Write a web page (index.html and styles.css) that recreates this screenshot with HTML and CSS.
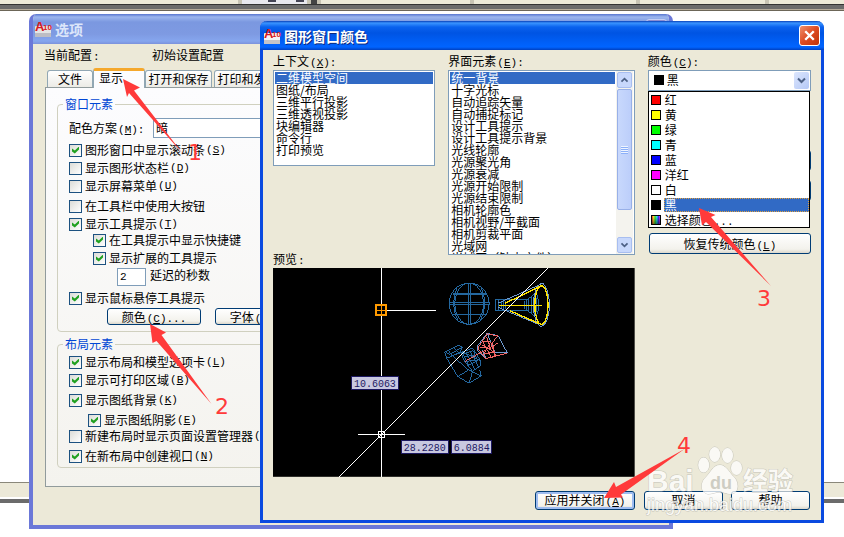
FILE: index.html
```html
<!DOCTYPE html>
<html lang="zh-CN">
<head>
<meta charset="utf-8">
<title>图形窗口颜色</title>
<link rel="stylesheet" href="styles.css">
</head>
<body>
<header class="toolstrip"><i class="dock d1"></i><i class="dock d2"></i><i class="gap"></i><i class="dock d3"></i><i class="dock d4"></i><i class="dock d5"></i><i class="dock d6"></i></header>
<div class="workspace"></div>
<footer class="statusbar"></footer>

<section class="window options" aria-label="选项">
  <div class="titlebar">
    <svg class="app-icon" viewBox="0 0 16 16"><rect x="0" y="5" width="16" height="11" rx="1" fill="#e4e4e4"/><rect x="0" y="12" width="16" height="4" fill="#bdbdc4"/><text x="0" y="10" class="icon-a">A</text><text x="8" y="9" class="icon-n">10</text></svg>
    <h2>选项</h2>
    <button class="ghost" aria-label="关闭"></button>
  </div>
  <div class="profile"><span>当前配置<b class="key">:</b></span><span>初始设置配置</span></div>
  <div class="tabs" role="tablist">
    <button role="tab" class="tab files">文件</button>
    <button role="tab" class="tab active" aria-selected="true">显示</button>
    <button role="tab" class="tab save">打开和保存</button>
    <button role="tab" class="tab print">打印和发布</button>
  </div>
  <div class="pane">
    <fieldset>
      <legend>窗口元素</legend>
      <div class="rows first">
        <div class="scheme"><label for="scheme">配色方案<b class="key">(<u>M</u>):</b></label><select id="scheme"><option>暗</option></select></div>
        <label class="row wide"><input type="checkbox" checked>图形窗口中显示滚动条<b class="key">(<u>S</u>)</b></label>
        <label class="row"><input type="checkbox">显示图形状态栏<b class="key">(<u>D</u>)</b></label>
        <label class="row"><input type="checkbox">显示屏幕菜单<b class="key">(<u>U</u>)</b></label>
        <label class="row wide"><input type="checkbox">在工具栏中使用大按钮</label>
        <label class="row"><input type="checkbox" checked>显示工具提示<b class="key">(<u>T</u>)</b></label>
        <label class="row tight indent"><input type="checkbox" checked>在工具提示中显示快捷键</label>
        <label class="row indent"><input type="checkbox" checked>显示扩展的工具提示</label>
        <div class="delay"><input id="delay" type="text" value="2"><label for="delay">延迟的秒数</label></div>
        <label class="row wide"><input type="checkbox" checked>显示鼠标悬停工具提示</label>
        <div class="pair"><button class="btn">颜色<b class="key">(<u>C</u>)...</b></button><button class="btn">字体<b class="key">(<u>F</u>)...</b></button></div>
      </div>
    </fieldset>
    <fieldset>
      <legend>布局元素</legend>
      <div class="rows">
        <label class="row wide"><input type="checkbox" checked>显示布局和模型选项卡<b class="key">(<u>L</u>)</b></label>
        <label class="row"><input type="checkbox" checked>显示可打印区域<b class="key">(<u>B</u>)</b></label>
        <label class="row wide"><input type="checkbox" checked>显示图纸背景<b class="key">(<u>K</u>)</b></label>
        <label class="row wide shadow"><input type="checkbox" checked>显示图纸阴影<b class="key">(<u>E</u>)</b></label>
        <label class="row tight"><input type="checkbox">新建布局时显示页面设置管理器<b class="key">(<u>G</u>)</b></label>
        <label class="row wide"><input type="checkbox" checked>在新布局中创建视口<b class="key">(<u>N</u>)</b></label>
      </div>
    </fieldset>
  </div>
</section>

<section class="window dialog" role="dialog" aria-label="图形窗口颜色">
  <div class="titlebar">
    <svg class="app-icon" viewBox="0 0 16 16"><rect x="0" y="5" width="16" height="11" rx="1" fill="#f4f4f4"/><rect x="0" y="12" width="16" height="4" fill="#c4c4c8"/><text x="0" y="10" class="icon-a">A</text><text x="8" y="9" class="icon-n">10</text></svg>
    <h2>图形窗口颜色</h2>
    <button class="close" aria-label="关闭"><svg viewBox="0 0 20 20"><path d="M5.500 5.500 14.500 14.500M14.500 5.500 5.500 14.500" stroke="#fff" stroke-width="2.500" fill="none"/></svg></button>
  </div>
  <div class="content">
    <div class="columns">
      <div class="col split">
        <div>
          <label class="caption" for="context">上下文<b class="key">(<u>X</u>):</b></label>
          <select id="context" class="list" size="8">
            <option selected>二维模型空间</option><option>图纸/布局</option><option>三维平行投影</option><option>三维透视投影</option><option>块编辑器</option><option>命令行</option><option>打印预览</option>
          </select>
        </div>
        <span class="caption-low">预览<b class="key">:</b></span>
      </div>
      <div class="col">
        <label class="caption" for="element">界面元素<b class="key">(<u>E</u>):</b></label>
        <div class="scrollbox">
          <select id="element" class="list" size="15">
            <option selected>统一背景</option><option>十字光标</option><option>自动追踪矢量</option><option>自动捕捉标记</option><option>设计工具提示</option><option>设计工具提示背景</option><option>光线轮廓</option><option>光源聚光角</option><option>光源衰减</option><option>光源开始限制</option><option>光源结束限制</option><option>相机轮廓色</option><option>相机视野/平截面</option><option>相机剪裁平面</option><option>光域网</option><option>光域网（缺少文件）</option>
          </select>
          <div class="scrollbar">
            <button aria-label="向上"><svg viewBox="0 0 15 15"><path d="M4 9.500 7.500 6 11 9.500" class="chev"/></svg></button>
            <div class="track"><div class="thumb"><i></i><i></i><i></i><i></i></div></div>
            <button aria-label="向下"><svg viewBox="0 0 15 15"><path d="M4 5.500 7.500 9 11 5.500" class="chev"/></svg></button>
          </div>
        </div>
      </div>
      <div class="col">
        <label class="caption" for="color">颜色<b class="key">(<u>C</u>):</b></label>
        <div class="combo">
          <select id="color"><option>黑</option></select>
          <i class="current-color"></i>
          <span class="arrow"><svg viewBox="0 0 15 15"><path d="M4 5.500 7.500 9 11 5.500" class="chev"/></svg></span>
          <ul class="menu" role="listbox" aria-label="颜色">
            <li role="option"><i class="swatch red"></i><span>红</span></li>
            <li role="option"><i class="swatch yellow"></i><span>黄</span></li>
            <li role="option"><i class="swatch green"></i><span>绿</span></li>
            <li role="option"><i class="swatch cyan"></i><span>青</span></li>
            <li role="option"><i class="swatch blue"></i><span>蓝</span></li>
            <li role="option"><i class="swatch magenta"></i><span>洋红</span></li>
            <li role="option"><i class="swatch white"></i><span>白</span></li>
            <li role="option" aria-selected="true"><i class="swatch black"></i><span>黑</span></li>
            <li role="option"><i class="swatch wheel"></i><span>选择颜色<b class="key">...</b></span></li>
          </ul>
        </div>
        <div class="restore">
          <button class="btn" aria-label="恢复当前元素"></button>
          <button class="btn" aria-label="恢复当前上下文"></button>
          <button class="btn last">恢复传统颜色<b class="key">(<u>L</u>)</b></button>
        </div>
      </div>
      <svg class="preview" viewBox="0 0 362 209">
        <rect width="362" height="209" fill="#000"/>
        <g shape-rendering="crispEdges" fill="none">
          <g transform="translate(157 -8) scale(.33333)" stroke-width="3">
            <g stroke="#2468a0">
              <ellipse cx="118" cy="131" rx="60" ry="62"/><ellipse cx="118" cy="131" rx="43" ry="62"/><path d="M115 69V193M122 69V193M58 129H179M58 133H179M68 100H168M68 103H168M66 163H170M82 83Q60 132 84 182M154 83Q176 132 152 182"/>
              <path d="M198 118H290V152H198ZM206 118V152M214 122V148M222 118V152M228 124V148M284 122V148M290 122 315 100Q328 134 315 168L290 150M296 116V154M306 108V162M314 100V168M315 100Q326 98 326 135Q326 170 315 168"/>
              <path d="M44 276 84 256 98 262 58 284ZM44 276 50 294 90 276 98 262M54 270 72 292M70 262 88 280M50 294 84 350 118 370 154 348 150 330M60 290 100 276 128 264 152 302 152 318 128 334 104 304 92 274M84 350 116 330 154 348M116 330 72 292M118 370 128 334M100 282 130 272 144 302 116 316ZM108 278 134 326M120 272 146 320M104 290 138 286M110 304 146 300M96 274 152 302"/>
            </g>
            <g stroke="#6f9bd0"><path d="M204 130 326 76 336 70 344 73M204 142 324 192 334 200 345 190"/><ellipse cx="335" cy="135" rx="24" ry="64"/><path d="M172 220 206 228 232 278 196 278ZM172 220 142 260 142 272 168 296 158 270"/></g>
            <g stroke="#ffe400" stroke-width="4"><path d="M207 136H336M226 130 326 82 336 78M240 152 326 190 334 192"/><ellipse cx="335" cy="135" rx="20" ry="58"/></g>
            <path stroke="#f26565" d="M172 222 158 244 144 264 168 296 232 280M172 222 204 228 188 248 196 290 168 296M158 244 182 246 198 290M156 254 196 278M150 262 182 266M106 304 204 250M162 282 196 276M170 230 184 272M158 244 184 292M182 246 162 284"/>
          </g>
          <path d="M66 209 275 0" stroke="#fff"/>
          <path d="M108.500 0V209M108.500 42.500H163M85 166.500H132" stroke="#fff"/>
          <rect x="103.500" y="37.500" width="10" height="10" stroke="#ff9a00" stroke-width="2"/><path d="M104 42.500H113M108.500 38V47" stroke="#ff9a00"/>
          <rect x="105.500" y="163.500" width="6" height="6" stroke="#fff"/>
          <g fill="#c8c8e0" stroke="#1c1860"><rect x="78.500" y="108.500" width="47" height="13"/><rect x="128.500" y="172.500" width="47" height="13"/><rect x="178.500" y="172.500" width="40" height="13"/></g>
        </g>
        <g class="dims"><text x="81" y="119">10.6063</text><text x="131" y="183">28.2280</text><text x="181" y="183">6.0884</text></g>
      </svg>
    </div>
    <div class="actions"><button class="btn default">应用并关闭<b class="key">(<u>A</u>)</b></button><button class="btn">取消</button><button class="btn">帮助</button></div>
  </div>
</section>

<svg class="overlay" viewBox="0 0 844 537" preserveAspectRatio="xMinYMin">
  <g class="mark">
    <ellipse cx="703.700" cy="465" rx="5.500" ry="7.500"/><ellipse cx="714.700" cy="454.500" rx="5.500" ry="7.500"/><ellipse cx="727.500" cy="455.500" rx="5.500" ry="7.500"/><ellipse cx="736.500" cy="468" rx="5.500" ry="7"/>
    <path d="M720 465C726 465 729 472 733 476C739 481 740 493 731 494C726 494 724 492 720 492C716 492 712 494 708 494C700 493 700 482 706 477C711 472 713 465 720 465Z"/>
    <text x="647" y="491" class="bai">Bai</text><text x="710" y="489" class="du">du</text><text x="743" y="490" class="exp">经验</text><text x="647" y="511" class="site">jingyan.baidu.com</text>
  </g>
  <g fill="#ff3a3a">
    <path d="M123 79 140 87.500 134 90.500 183 154 129 93 127 97Z"/>
    <path d="M150 324 166 332.500 161.500 335 211.500 404 156.500 341 152.500 343Z"/>
    <path d="M699 208 715.500 215 711 217 771 286 706 222 702 225.500Z"/>
    <path d="M604 498 614 482 616 487 684.500 449 621 494.500 623 497.500Z"/>
    <g class="numbers"><text x="195" y="160">1</text><text x="222" y="414">2</text><text x="764" y="306">3</text><text x="684" y="453">4</text></g>
  </g>
</svg>
</body>
</html>
```
FILE: styles.css
```css
* { box-sizing: border-box; }
body {
  margin: 0;
  min-height: 100vh;
  position: relative;
  display: flex;
  flex-direction: column;
  overflow: hidden;
  background: #fff;
  color: #000;
  font: 12px/14px "Noto Sans CJK SC", sans-serif;
}
button, select, input { font: inherit; color: inherit; margin: 0; padding: 0; }
button { white-space: nowrap; }
h2 { margin: 0; font-size: 14px; line-height: 16px; font-weight: 700; }
i { font-style: normal; }
.key { margin-left: 1px; font: 400 11px/0 "Liberation Mono", monospace; }

.toolstrip {
  display: flex;
  gap: 4px;
  height: 11px;
  background: linear-gradient(#c8c4b4 0 4px, #333 4px 5px, #6b6b6b 5px 9px, #b5ab9a 9px 10px, #6c6658 10px);
}
.dock { height: 4px; background: #ece9d8; flex: 160; }
.d1 { flex: 236; }
.d2 { flex: 65; background: linear-gradient(90deg, #e8e8ee 0 26px, #445 26px 34px, #e8e8ee 34px 54px, #445 54px 62px, #e8e8ee 62px) 0 0 / 100% 2px no-repeat #e8e8ee; }
.gap { flex: 6; height: 4px; background: #444; }
.d3 { flex: 148; }
.d5 { flex: 125; }
.d6 { flex: 74; }
.workspace { flex: 1; }
.statusbar {
  height: 21px;
  margin-bottom: 34px;
  background: linear-gradient(#8a887a 0 1px, #ece9d8 1px 15px, #fff 15px 17px, #6b6b6b 17px);
}

.window { position: absolute; background: #ece9d8; }
.options {
  left: 29px;
  right: 171px;
  top: 14px;
  border: solid #6b78d8;
  border-width: 0 4px 4px;
  border-radius: 7px 7px 0 0;
  padding-bottom: 38px;
  overflow: hidden;
}
.titlebar { display: flex; align-items: center; gap: 4px; }
.options .titlebar {
  height: 30px;
  margin: 0 -4px;
  padding: 0 6px;
  color: #dce6fa;
  background: linear-gradient(#5876d0 0, #9cb6ee 3px, #7b98e0 8px, #7e9ae2 20px, #86a6ee 27px, #7b92dc);
}
.titlebar h2 { flex: 1; }
.ghost { align-self: flex-start; margin-top: 5px; width: 21px; height: 21px; border: 1px solid #c4cef4; border-radius: 3px; background: #8c8cd0; }
.app-icon { width: 16px; height: 16px; flex: none; overflow: visible; }
.icon-a { font: 700 13px "Liberation Sans", sans-serif; fill: #d81820; }
.icon-n { font: 700 8px "Liberation Sans", sans-serif; fill: #d81820; }

.profile { display: grid; grid-template-columns: 108px 1fr; padding: 4px 0 6px 11px; }
.tabs { display: flex; align-items: flex-end; padding-left: 14px; height: 19px; }
.tab {
  height: 17px;
  line-height: 14px;
  border: 1px solid #91a7b4;
  border-bottom: 0;
  border-radius: 3px 3px 0 0;
  background: linear-gradient(#fff, #ecebe6);
}
.files { width: 46px; }
.tab.active { position: relative; width: 52px; height: 20px; margin-bottom: -1px; padding: 0 16px 4px 0; border-top: 3px solid #f5a82c; background: #fcfcfe; }
.save { width: 67px; margin-right: 2px; }
.print { width: 67px; }
.pane {
  margin: 0 12px;
  padding: 10px 11px 18px;
  border: 1px solid #919b9c;
  background: linear-gradient(#fcfcfe, #f4f3ee);
}
fieldset { margin: 0 0 6px; padding: 0 5px; border: 1px solid #d0d0bf; border-radius: 4px; min-width: 0; }
fieldset:last-child { margin-bottom: 0; }
legend { padding: 0 2px; line-height: 12px; color: #0046d5; }
.rows { padding: 0 6px 3px; display: flex; flex-direction: column; align-items: flex-start; }
.rows.first { padding: 8px 6px 6px; }
.scheme { display: flex; align-items: center; height: 20px; width: 100%; }
.scheme label { width: 84px; }
.scheme select { flex: 1; height: 20px; padding-left: 2px; appearance: none; border: 1px solid #7f9db9; border-radius: 0; background: #fff; }
.row { display: flex; align-items: center; height: 16px; margin-top: 2px; white-space: nowrap; }
.row.wide { margin-top: 4px; }
.row.tight { margin-top: 0; }
.row.indent { margin-left: 24px; }
.row.shadow { margin-left: 19px; }
.row .key { line-height: 14px; }
input[type="checkbox"] {
  appearance: none;
  width: 13px;
  height: 13px;
  margin-right: 3px;
  border: 1px solid #1c5180;
  background: linear-gradient(135deg, #dcdcd7, #fff);
}
input[type="checkbox"]:checked::before {
  content: "";
  display: block;
  width: 7px;
  height: 7px;
  margin: 2px;
  background: #21a121;
  clip-path: polygon(0 28%, 40% 57%, 100% 0, 100% 43%, 40% 100%, 0 70%);
}
.delay { display: flex; gap: 4px; height: 18px; margin: 2px 0 0 48px; }
.delay input { width: 29px; height: 18px; padding: 0 2px; border: 1px solid #7f9db9; background: #fff; font: 11px "Liberation Mono", monospace; }
.pair { display: flex; gap: 14px; margin: 2px 0 0 38px; }
.pair .btn { width: 94px; height: 17px; line-height: 14px; }
.btn {
  border: 1px solid #003c74;
  border-radius: 3px;
  background: linear-gradient(#fff, #f3f2ec 80%, #dcd8cc);
}

.dialog {
  left: 260px;
  right: 20px;
  top: 21px;
  border: solid #0a4ae0;
  border-width: 0 3px 3px;
  border-radius: 7px 7px 0 0;
}
.dialog .titlebar {
  height: 29px;
  margin: 0 -3px;
  padding: 0 4px;
  border-radius: 7px 7px 0 0;
  color: #fff;
  background: linear-gradient(#0840b8 0, #3a94ff 2px, #0a62ee 6px, #0054e3 12px, #0060f8 22px, #0064ff 26px, #0040c0);
}
.dialog h2 { text-shadow: 1px 1px #0a2a80; }
.close { width: 21px; height: 21px; border: 1px solid #fff; border-radius: 3px; background: linear-gradient(135deg, #f0906c, #dc4a22 50%, #c03408); }
.close svg { display: block; width: 19px; height: 19px; }
.content { padding: 4px 10px 10px; }
.columns { display: grid; grid-template-columns: 162fr 186fr 163fr; column-gap: 13px; row-gap: 2px; }
.col { min-width: 0; }
.split { display: flex; flex-direction: column; justify-content: space-between; }
.caption { display: block; line-height: 14px; margin-bottom: 2px; }
.caption-low { line-height: 14px; }
.list {
  display: block;
  width: 100%;
  height: 96px;
  padding: 1px;
  border: 1px solid #7f9db9;
  border-radius: 0;
  background: #fff;
  overflow: hidden;
  line-height: 12px;
  scrollbar-width: none;
}
.list option { display: flex; align-items: center; height: 12px; min-height: 12px; line-height: 12px; padding: 0 1px 2px; }
.list option:checked { background: linear-gradient(#316ac5, #316ac5); -webkit-text-fill-color: #fff; }
.scrollbox { display: flex; height: 185px; margin-bottom: 11px; padding-right: 1px; border: 1px solid #7f9db9; background: #fff; }
.scrollbox .list { flex: 1; min-width: 0; height: 183px; border: 0; }
.scrollbar { width: 17px; padding: 1px; display: flex; flex-direction: column; background: #f4f3ee; }
.scrollbar button { height: 16px; border: 1px solid #a8bef0; border-radius: 2px; background: #c8d8fc; }
.scrollbar svg, .arrow svg { display: block; width: 100%; height: 100%; }
.chev { fill: none; stroke: #4d6185; stroke-width: 2; }
.track { flex: 1; padding: 1px 0; }
.thumb { height: 82%; display: flex; flex-direction: column; align-items: center; justify-content: center; gap: 1px; border: 1px solid #98b0e8; border-radius: 2px; background: linear-gradient(90deg, #c8d8fc, #bccefa); }
.thumb i { width: 7px; height: 1px; background: #eef4ff; box-shadow: 0 1px #8cb0f8; }

.combo { position: relative; height: 21px; }
.combo select { width: 100%; height: 21px; padding: 0 0 2px 18px; appearance: none; border: 1px solid #7f9db9; border-radius: 0; background: #fff; }
.current-color { position: absolute; left: 6px; top: 5px; width: 10px; height: 10px; background: #000; }
.arrow { position: absolute; right: 2px; top: 2px; width: 15px; height: 17px; border-radius: 2px; background: linear-gradient(135deg, #dce6fd, #b4c8f6); }
.menu { position: absolute; left: 0; right: 1px; top: 21px; margin: 0; padding: 0; list-style: none; border: 1px solid #000; background: #fff; }
.menu li { display: flex; align-items: center; gap: 3px; height: 15px; padding-left: 2px; }
.menu span { flex: 1; padding-left: 1px; }
.menu [aria-selected] span { background: #316ac5; color: #fff; outline: 1px dotted #e0a040; outline-offset: -1px; }
.swatch { width: 10px; height: 10px; border: 1px solid #000; }
.red { background: #f00; }
.yellow { background: #ff0; }
.green { background: #0f0; }
.cyan { background: #0ff; }
.blue { background: #00f; }
.magenta { background: #f0f; }
.black { background: #000; }
.wheel { background: linear-gradient(transparent, #0008), linear-gradient(90deg, #f33, #fe3, #3e3, #3ef, #33f, #f3f); }
.restore { margin: 59px 0 0 1px; display: flex; flex-direction: column; gap: 9px; }
.restore .btn { height: 21px; }
.restore .last { margin-top: 23px; }
.preview { grid-column: 1 / 3; display: block; width: 100%; height: auto; }
.dims { font: 10px "Liberation Mono", monospace; fill: #1c1860; }
.actions { display: flex; justify-content: flex-end; gap: 8px; margin-top: 14px; padding-right: 1px; }
.actions .btn { width: 79px; height: 19px; line-height: 16px; }
.actions .default { width: 100px; margin-right: 1px; box-shadow: inset 0 0 0 2px #9ebcf0; }

.overlay { position: absolute; inset: 0; width: 100%; height: 100%; pointer-events: none; }
.numbers { font: 22px "DejaVu Sans", sans-serif; text-anchor: middle; }
.mark { fill: #fff; stroke: #b8b8b0; stroke-width: 1; paint-order: stroke; opacity: .75; }
.bai { font: 700 30px "Liberation Sans", sans-serif; }
.du { font: 700 18px "Liberation Sans", sans-serif; fill: #c4c4bc; stroke: none; }
.exp { font: 700 25px "Noto Sans CJK SC", sans-serif; }
.site { font: 18px "Liberation Sans", sans-serif; }
```
